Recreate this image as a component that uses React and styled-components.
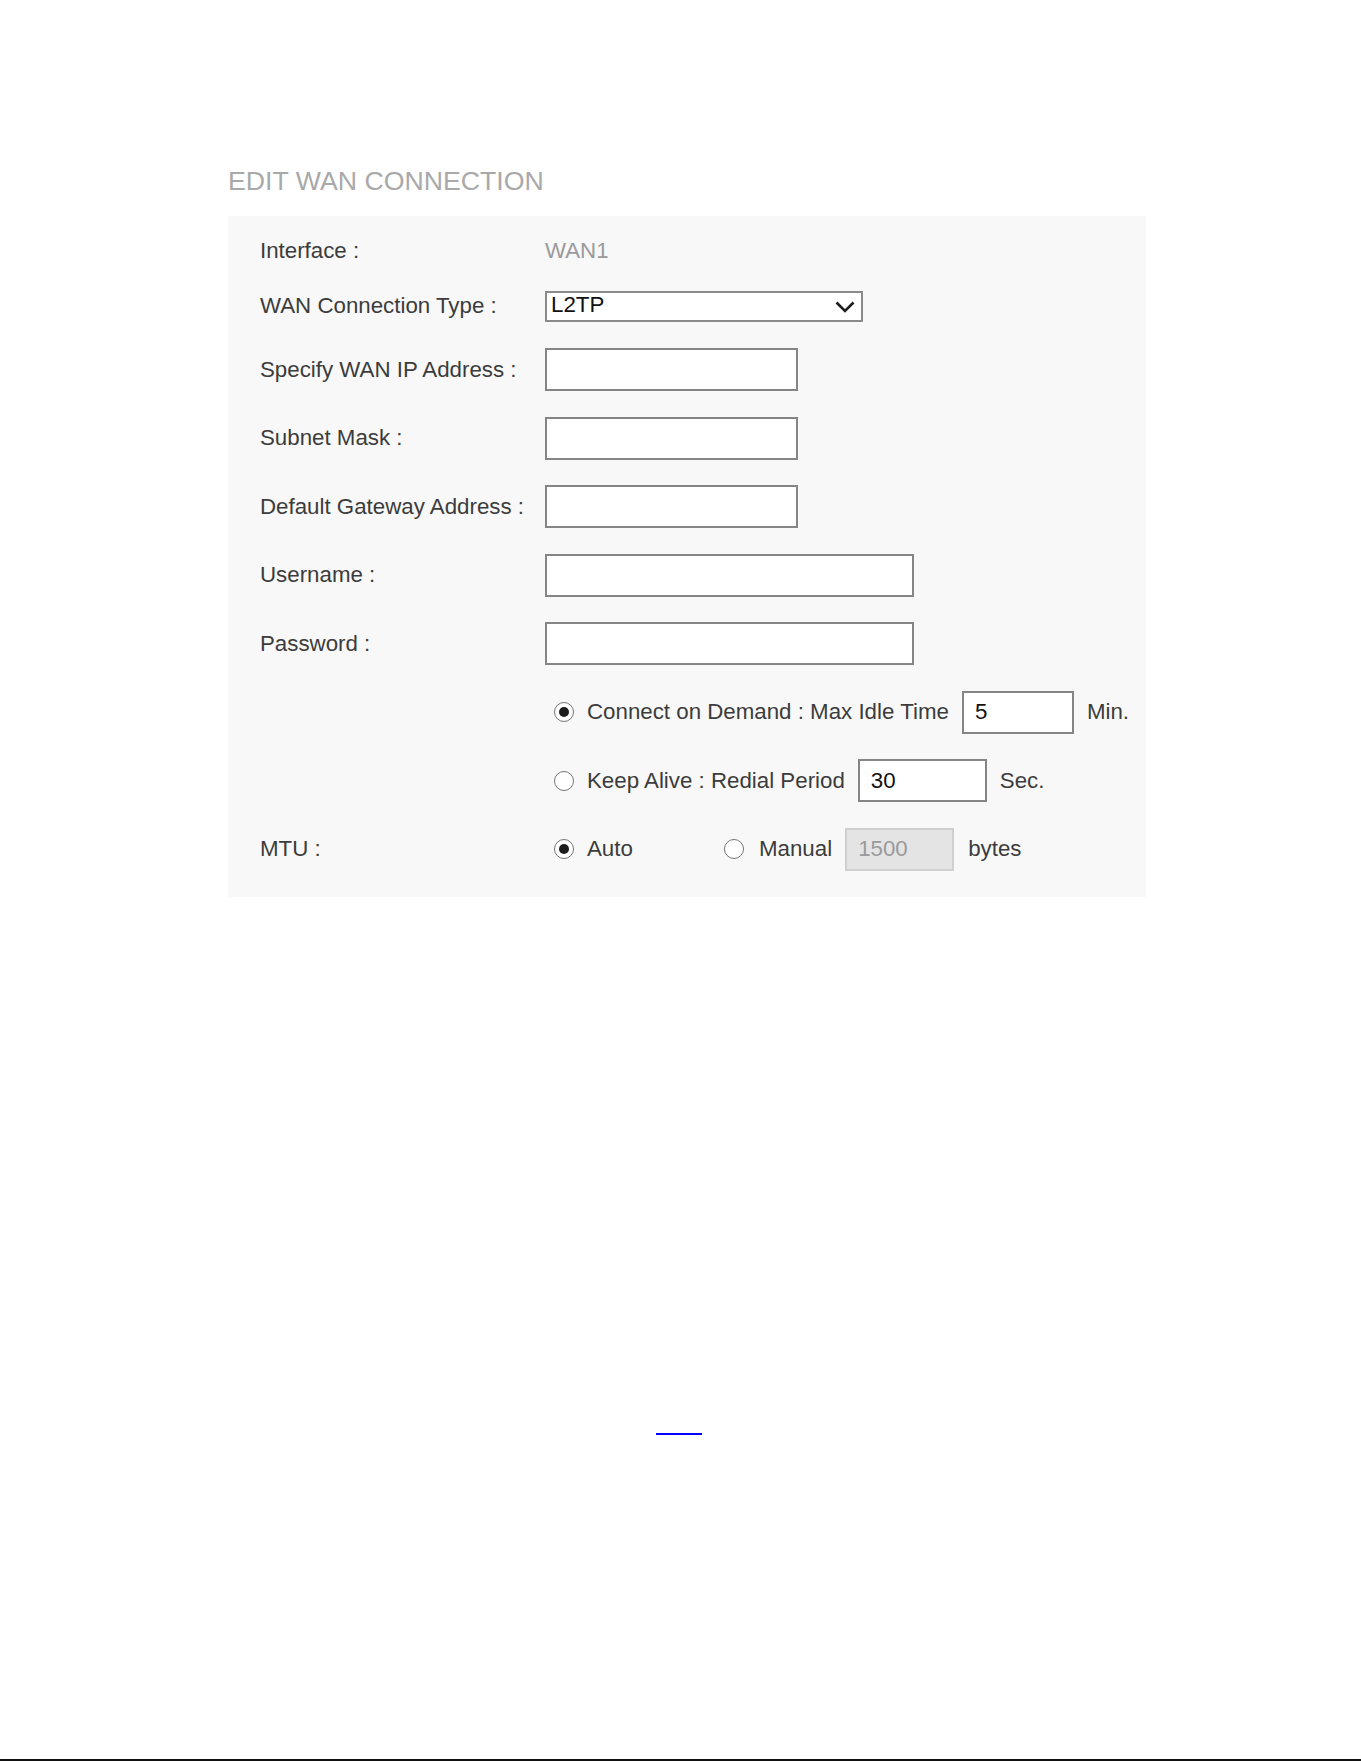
import React from 'react'
import styled, { createGlobalStyle } from 'styled-components'

const GlobalStyle = createGlobalStyle`
    html, body {
        margin: 0;
        padding: 0;
        background: #ffffff;
    }
    body {
        font-family: "Liberation Sans", Arial, sans-serif;
    }
`

function Radio({ checked }) {
    return (
        <RadioCircle>
            {checked && <RadioDot />}
        </RadioCircle>
    )
}

function App() {
    return (
        <Page>
            <GlobalStyle />
            <Title>EDIT WAN CONNECTION</Title>
            <Panel>
                <Row $space={0}>
                    <Label>Interface :</Label>
                    <Value>WAN1</Value>
                </Row>
                <Row $space={12.5}>
                    <Label>WAN Connection Type :</Label>
                    <Select>
                        <span>L2TP</span>
                        <svg width="20" height="12" viewBox="0 0 20 12">
                            <polyline points="1.5,1.5 10,10 18.5,1.5" fill="none" stroke="#1e1e1e" strokeWidth="2.6" />
                        </svg>
                    </Select>
                </Row>
                <Row $space={20.5}>
                    <Label>Specify WAN IP Address :</Label>
                    <TextBox $w={253} />
                </Row>
                <Row>
                    <Label>Subnet Mask :</Label>
                    <TextBox $w={253} />
                </Row>
                <Row>
                    <Label>Default Gateway Address :</Label>
                    <TextBox $w={253} />
                </Row>
                <Row>
                    <Label>Username :</Label>
                    <TextBox $w={369} />
                </Row>
                <Row>
                    <Label>Password :</Label>
                    <TextBox $w={369} />
                </Row>
                <Row>
                    <span />
                    <Options>
                        <Option>
                            <Radio checked />
                            <OptionText>Connect on Demand : Max Idle Time</OptionText>
                        </Option>
                        <TextBox $w={112} defaultValue="5" />
                        <Unit>Min.</Unit>
                    </Options>
                </Row>
                <Row>
                    <span />
                    <Options>
                        <Option>
                            <Radio />
                            <OptionText>Keep Alive : Redial Period</OptionText>
                        </Option>
                        <TextBox $w={129} defaultValue="30" />
                        <Unit>Sec.</Unit>
                    </Options>
                </Row>
                <Row>
                    <Label>MTU :</Label>
                    <Options>
                        <Option $w={170}>
                            <Radio checked />
                            <OptionText>Auto</OptionText>
                        </Option>
                        <Option>
                            <Radio />
                            <OptionText $gap={15}>Manual</OptionText>
                        </Option>
                        <TextBox $w={109} defaultValue="1500" disabled />
                        <Unit $gap={14}>bytes</Unit>
                    </Options>
                </Row>
            </Panel>
            <Footer>
                <Link href="#"></Link>
            </Footer>
        </Page>
    )
}

const Page = styled.div`
    box-sizing: border-box;
    height: 1761px;
    padding: 166px 0 0 228px;
    border-bottom: 2px solid #111111;
    overflow: hidden;
`

const Title = styled.h1`
    margin: 0 0 20px;
    font-size: 26.7px;
    line-height: 30px;
    font-weight: normal;
    color: #a9a9a9;
    letter-spacing: 0;
`

const Panel = styled.div`
    box-sizing: border-box;
    width: 918px;
    background: #f8f8f8;
    padding: 13px 0 26px 32px;
`

const Row = styled.div`
    display: grid;
    grid-template-columns: 285px 1fr;
    align-items: center;
    height: 43px;
    margin-top: ${p => (p.$space ?? 25.5)}px;
`

const Label = styled.span`
    font-size: 22.3px;
    color: #3c3c3c;
    white-space: nowrap;
`

const Value = styled.span`
    font-size: 22.3px;
    color: #9a9a9a;
`

const Select = styled.div`
    box-sizing: border-box;
    width: 318px;
    height: 31px;
    border: 2px solid #8a8a8a;
    background: #ffffff;
    display: flex;
    align-items: center;
    justify-content: space-between;
    padding: 0 6px 2px 4px;
    font-size: 22.3px;
    color: #111111;

    svg {
        margin-top: 3px;
    }
`

const TextBox = styled.input`
    box-sizing: border-box;
    width: ${p => p.$w}px;
    height: 43px;
    margin: 0;
    border: 2px solid ${p => (p.disabled ? '#cfcfcf' : '#858585')};
    background: ${p => (p.disabled ? '#e4e4e4' : '#ffffff')};
    padding: 0 11px;
    font-family: "Liberation Sans", Arial, sans-serif;
    font-size: 22.3px;
    color: ${p => (p.disabled ? '#9a9a9a' : '#111111')};
    outline: none;
`

const Options = styled.div`
    display: flex;
    align-items: center;
`

const Option = styled.label`
    display: flex;
    align-items: center;
    padding-left: 9px;
    width: ${p => (p.$w ? `${p.$w}px` : 'auto')};
    box-sizing: border-box;
`

const RadioCircle = styled.span`
    box-sizing: border-box;
    width: 20px;
    height: 20px;
    border-radius: 50%;
    border: 1.5px solid #747474;
    background: #ffffff;
    display: flex;
    align-items: center;
    justify-content: center;
    flex-shrink: 0;
`

const RadioDot = styled.span`
    width: 10px;
    height: 10px;
    border-radius: 50%;
    background: #1c1c1c;
`

const OptionText = styled.span`
    margin: 0 13px 0 ${p => p.$gap ?? 13}px;
    font-size: 22.3px;
    color: #3c3c3c;
    white-space: nowrap;
`

const Unit = styled.span`
    margin-left: ${p => p.$gap ?? 13}px;
    font-size: 22.3px;
    color: #3c3c3c;
`

const Footer = styled.div`
    margin: 516px 0 0 428px;
`

const Link = styled.a`
    display: inline-block;
    width: 46px;
    height: 20px;
    border-bottom: 2px solid #0000ff;
`

export default App
